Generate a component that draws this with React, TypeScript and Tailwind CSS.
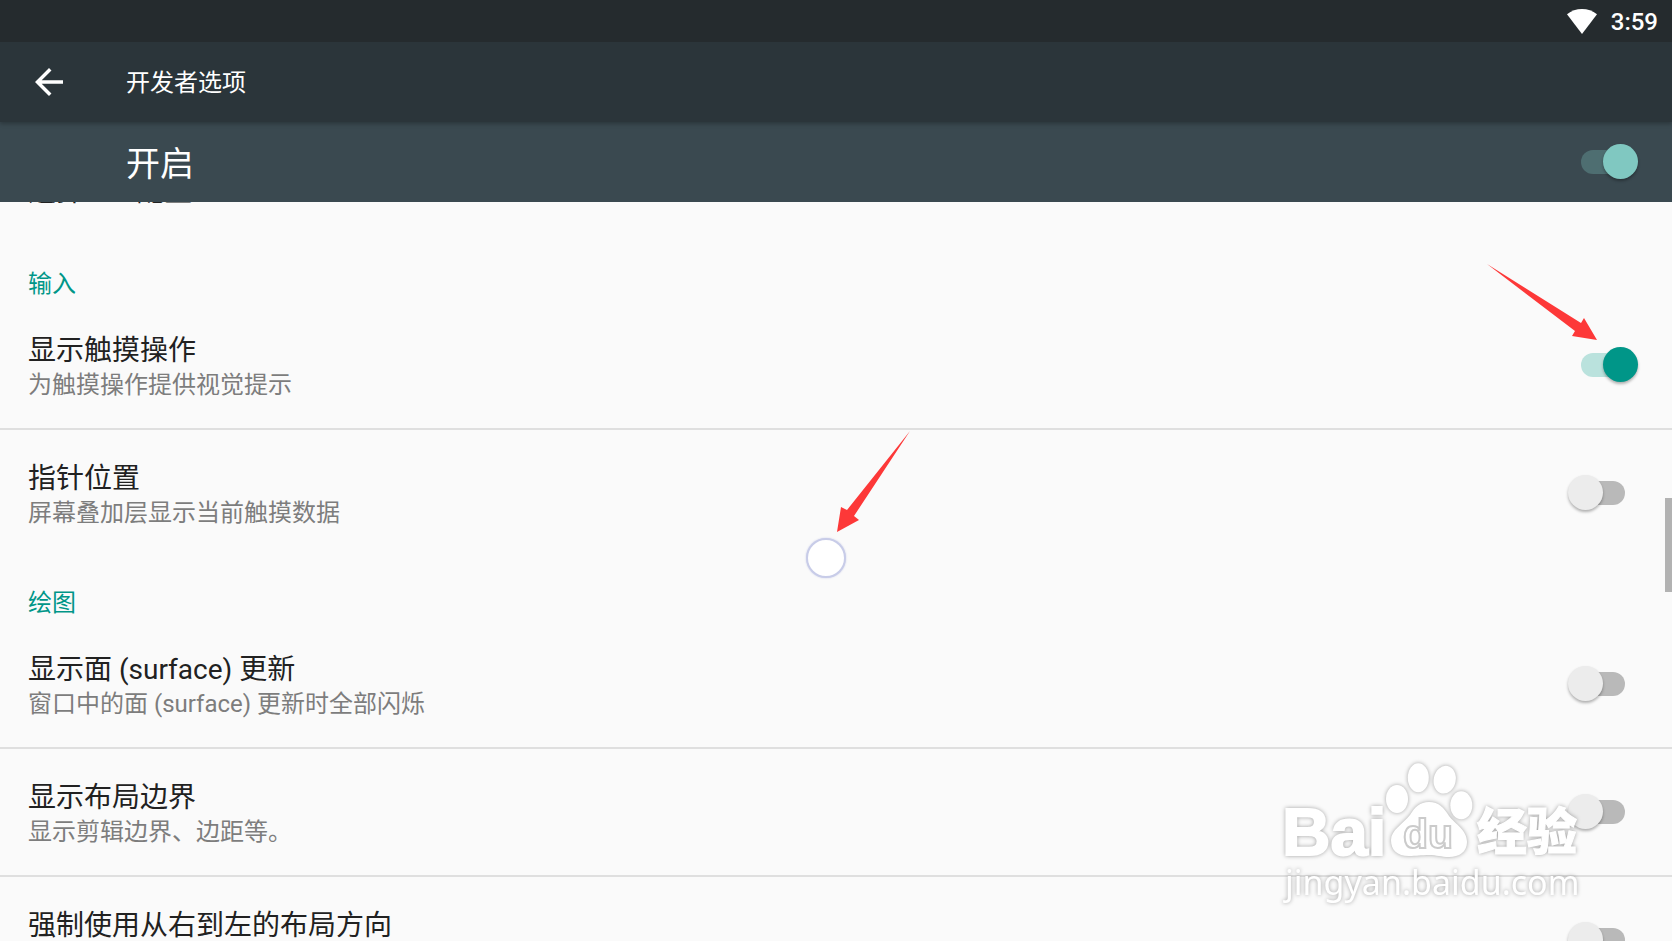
import { useState } from "react";

interface SettingItem {
  id: string;
  title: string;
  summary?: string;
  checked: boolean;
}

interface SettingGroup {
  title: string;
  items: SettingItem[];
}

const groups: SettingGroup[] = [
  {
    title: "输入",
    items: [
      { id: "show-touches", title: "显示触摸操作", summary: "为触摸操作提供视觉提示", checked: true },
      { id: "pointer-location", title: "指针位置", summary: "屏幕叠加层显示当前触摸数据", checked: false },
    ],
  },
  {
    title: "绘图",
    items: [
      { id: "surface-updates", title: "显示面 (surface) 更新", summary: "窗口中的面 (surface) 更新时全部闪烁", checked: false },
      { id: "layout-bounds", title: "显示布局边界", summary: "显示剪辑边界、边距等。", checked: false },
      { id: "force-rtl", title: "强制使用从右到左的布局方向", checked: false },
    ],
  },
];

interface SwitchProps {
  id: string;
  defaultChecked: boolean;
  dark?: boolean;
}

function Switch({ id, defaultChecked, dark = false }: SwitchProps) {
  const [on, setOn] = useState(defaultChecked);
  const colors = dark
    ? "checked:before:bg-[#4e6e71] checked:after:bg-[#80c8c1]"
    : "checked:before:bg-[#bae2dd] checked:after:bg-[#009688]";

  return (
    <input
      id={id}
      type="checkbox"
      role="switch"
      checked={on}
      onChange={(e) => setOn(e.target.checked)}
      className={`relative w-[70px] h-9 shrink-0 appearance-none cursor-pointer before:absolute before:left-[13px] before:top-[6px] before:w-11 before:h-6 before:rounded-full before:bg-[#b9b9b9] after:absolute after:left-0 after:top-0 after:w-[35px] after:h-[35px] after:rounded-full after:bg-[#ececec] after:shadow-[0_2px_3px_rgba(0,0,0,0.3)] checked:after:left-[35px] ${colors}`}
    />
  );
}

function SettingRow({ item, divider }: { item: SettingItem; divider: boolean }) {
  return (
    <li className={`flex items-center h-32 shrink-0 pl-7 pr-[34px] border-b-2 ${divider ? "border-[#dfdfdf]" : "border-transparent"}`}>
      <label htmlFor={item.id} className="flex-1 flex flex-col pt-1 cursor-pointer">
        <span className="text-[28px] leading-9 text-[#212121]">{item.title}</span>
        <span className="min-h-8 text-2xl leading-8 text-[#7d7d7d]">{item.summary}</span>
      </label>
      <Switch id={item.id} defaultChecked={item.checked} />
    </li>
  );
}

function Watermark() {
  return (
    <svg
      className="absolute right-[87px] bottom-[33px] w-[304px] h-[150px] overflow-visible pointer-events-none drop-shadow-[0_0_2px_rgba(0,0,0,0.35)]"
      viewBox="0 0 304 150"
      fill="#fff"
    >
      <text x="1" y="97" fontSize="67" fontWeight="700" stroke="#fff" strokeWidth="2" className="font-['Liberation_Sans',sans-serif]">Bai</text>
      <ellipse cx="116" cy="41" rx="11" ry="14" />
      <ellipse cx="137.3" cy="19.7" rx="10.5" ry="14.5" />
      <ellipse cx="163.7" cy="21.7" rx="11" ry="14" transform="rotate(12 163.7 21.7)" />
      <ellipse cx="180.3" cy="47.3" rx="11" ry="14" />
      <path d="M148 44C158 44 163 50 168 58C174 66 186 72 186 84C186 94 178 99 168 99C160 99 156 97 148 97C140 97 135 98 128 98C116 98 110 92 110 82C110 72 122 66 129 57C134 49 139 44 148 44Z" />
      <text x="122" y="90" fontSize="41" fontWeight="700" stroke="#cbcbcb" strokeWidth="2" className="font-['Liberation_Sans',sans-serif]">du</text>
      <text x="196" y="92" fontSize="50" fontWeight="900" stroke="#fff" strokeWidth="1" className="font-['Noto_Sans_CJK_SC',sans-serif]">经验</text>
      <text x="4" y="137" fontSize="34" className="font-['Noto_Sans',sans-serif]">jingyan.baidu.com</text>
    </svg>
  );
}

export default function App() {
  return (
    <div className="relative flex flex-col h-screen overflow-hidden bg-[#fafafa] font-['Roboto','Noto_Sans_CJK_SC',sans-serif]">
      {/* Status bar */}
      <div className="relative z-30 flex items-center justify-end h-[42px] shrink-0 gap-[14px] pr-[14px] bg-[#252b2e] text-white">
        <svg className="w-[30px] h-[25px]" viewBox="0 0 30 25" fill="currentColor">
          <path d="M0 5.2C4.300 1.800 9.500 0 15 0s10.700 1.800 15 5.200L15 25z" />
        </svg>
        <span className="pt-0.5 text-2xl leading-8 font-medium">3:59</span>
      </div>

      {/* Toolbar */}
      <header className="relative z-20 flex items-center h-20 shrink-0 gap-14 pl-7 bg-[#2b353a] text-white shadow-[0_2px_4px_rgba(0,0,0,0.25)]">
        <button aria-label="返回" className="cursor-pointer">
          <svg className="w-[42px] h-[42px]" viewBox="0 0 24 24" fill="currentColor">
            <path d="M20 11H7.830l5.590-5.590L12 4l-8 8 8 8 1.410-1.410L7.830 13H20v-2z" />
          </svg>
        </button>
        <h1 className="pt-0.5 text-2xl leading-9">开发者选项</h1>
      </header>

      {/* Master switch */}
      <div className="relative z-10 flex items-center justify-between h-20 shrink-0 pl-[126px] pr-[34px] bg-[#3a4950] text-white">
        <label htmlFor="master" className="pt-1 text-[34px] leading-10">开启</label>
        <Switch id="master" defaultChecked dark />
      </div>

      <main className="flex-1 min-h-0 overflow-hidden">
        {/* Scrolled partly under the master switch */}
        <div className="flex items-center h-[98px] -mt-[61px] pt-1 pl-7 text-[28px] leading-9 text-[#212121]">选择USB配置</div>
        {groups.map((group) => (
          <section key={group.title}>
            <h2 className="flex items-end h-[63px] pl-7 text-2xl leading-9 text-[#009688]">{group.title}</h2>
            <ul>
              {group.items.map((item, index) => (
                <SettingRow key={item.id} item={item} divider={index < group.items.length - 1} />
              ))}
            </ul>
          </section>
        ))}
      </main>

      {/* Scroll thumb */}
      <div className="absolute right-0 top-[498px] w-[7px] h-[94px] bg-[#b2b2b2]" />

      {/* Touch point and the arrows that point at it and at the switch */}
      <div className="absolute left-1/2 top-[538px] -ml-[30px] w-10 h-10 rounded-full border-2 border-[#c8cce8] bg-white shadow-[0_0_2px_#c8cce8]" />
      <svg className="absolute left-1/2 top-[431px] w-[74px] h-[102px] pointer-events-none" viewBox="0 0 74 102" fill="#fd3838">
        <path d="M74 0L18 85L23 89L1 101L5 76L11 79Z" />
      </svg>
      <svg className="absolute right-[75px] top-[264px] w-[110px] h-[76px] pointer-events-none" viewBox="0 0 110 76" fill="#fd3838">
        <path d="M0 0L94 59L97 54L110 76L85 72L88 67Z" />
      </svg>

      <Watermark />
    </div>
  );
}
